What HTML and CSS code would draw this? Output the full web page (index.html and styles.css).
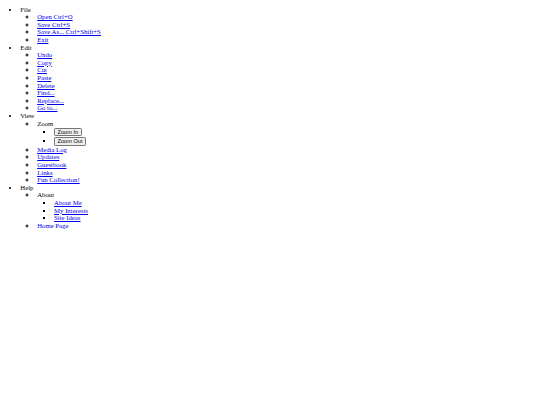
FILE: index.html
```html
<!DOCTYPE html>
<html>
<head>
<meta charset="utf-8">
<title>Menu</title>
<link rel="stylesheet" href="styles.css">
</head>
<body class="page">
<ul class="menu">
  <li>File
    <ul class="sub">
      <li><a class="link" href="#">Open Ctrl+O</a></li>
      <li><a class="link" href="#">Save Ctrl+S</a></li>
      <li><a class="link" href="#">Save As... Ctrl+Shift+S</a></li>
      <li><a class="link" href="#">Exit</a></li>
    </ul>
  </li>
  <li>Edit
    <ul class="sub">
      <li><a class="link" href="#">Undo</a></li>
      <li><a class="link" href="#">Copy</a></li>
      <li><a class="link" href="#">Cut</a></li>
      <li><a class="link" href="#">Paste</a></li>
      <li><a class="link" href="#">Delete</a></li>
      <li><a class="link" href="#">Find...</a></li>
      <li><a class="link" href="#">Replace...</a></li>
      <li><a class="link" href="#">Go to...</a></li>
    </ul>
  </li>
  <li>View
    <ul class="sub">
      <li>Zoom
        <ul class="sub3">
          <li class="btn-row"><button class="btn" type="button">Zoom In</button></li>
          <li class="btn-row"><button class="btn" type="button">Zoom Out</button></li>
        </ul>
      </li>
      <li><a class="link" href="#">Media Log</a></li>
      <li><a class="link" href="#">Updates</a></li>
      <li><a class="link" href="#">Guestbook</a></li>
      <li><a class="link" href="#">Links</a></li>
      <li><a class="link" href="#">Fun Collection!</a></li>
    </ul>
  </li>
  <li>Help
    <ul class="sub">
      <li>About
        <ul class="sub3">
          <li><a class="link" href="#">About Me</a></li>
          <li><a class="link" href="#">My Interests</a></li>
          <li><a class="link" href="#">Site Ideas</a></li>
        </ul>
      </li>
      <li><a class="link" href="#">Home Page</a></li>
    </ul>
  </li>
</ul>
</body>
</html>
```

FILE: styles.css
```css
.page {
  margin: 0;
  padding: 5.6px 0 0 3.4px;
  font-family: "Liberation Serif", "Times New Roman", serif;
  font-size: 6.75px;
  line-height: 7.6px;
  color: #000;
}
.menu {
  margin: 0;
  padding-left: 16.9px;
  list-style-type: disc;
}
.sub {
  margin: 0;
  padding-left: 16.9px;
  list-style-type: circle;
}
.sub3 {
  margin: 0;
  padding-left: 16.9px;
  list-style-type: square;
}
.link {
  color: #0000ee;
  text-decoration: underline;
}
.btn-row {
  line-height: 9px;
}
.btn {
  font-family: "Liberation Sans", Arial, sans-serif;
  font-size: 5.6px;
  line-height: 6px;
  padding: 0.4px 2.5px;
  margin: 0;
  border: 0.8px solid #767676;
  border-radius: 1.2px;
  background: #efefef;
  color: #000;
}
```
